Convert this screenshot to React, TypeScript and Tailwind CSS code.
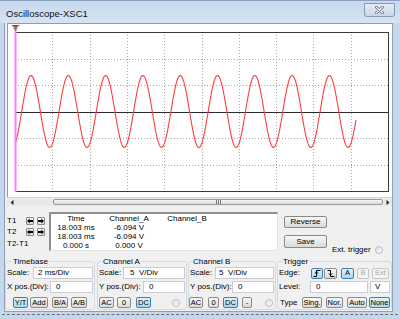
import React from "react";

type BtnProps = {
  children?: React.ReactNode;
  className?: string;
  active?: boolean;
  disabled?: boolean;
};

function Btn({ children, className = "", active, disabled }: BtnProps) {
  const look = active
    ? "border-[#3c7fb1] bg-linear-to-b from-[#e3f3fc] to-[#a6d6f2] text-black"
    : disabled
    ? "border-[#c6c6c6] bg-[#f4f4f4] text-[#a8a8a8]"
    : "border-[#8a8a8a] bg-linear-to-b from-[#f8f8f8] to-[#dadada] text-black";
  return (
    <div className={`flex items-center justify-center h-[11px] rounded-[2px] border text-[7.5px] leading-none ${look} ${className}`}>
      {children}
    </div>
  );
}

function Field({ children, className = "" }: { children?: React.ReactNode; className?: string }) {
  return (
    <div className={`h-[12px] bg-white border border-[#c9ccd2] flex items-center text-[8px] leading-none ${className}`}>
      {children}
    </div>
  );
}

function Radio({ className = "" }: { className?: string }) {
  return <div className={`w-[8px] h-[8px] rounded-full border border-[#bcbcbc] bg-linear-to-br from-[#e2e2e2] to-[#fbfbfb] ${className}`} />;
}

function Group({ title, className = "", legend = "", children }: { title: string; className?: string; legend?: string; children?: React.ReactNode }) {
  return (
    <fieldset className={`h-[53px] border border-[#d3dbe2] rounded-[3px] ${className}`}>
      <legend className={`text-[8px] leading-[9px] px-[1px] ${legend}`}>{title}</legend>
      {children}
    </fieldset>
  );
}

function ArrowBtn({ dir }: { dir: "l" | "r" }) {
  return (
    <div className="w-[8px] h-[8px] rounded-[1px] border border-[#8a8a8a] bg-linear-to-b from-[#f8f8f8] to-[#dadada] flex items-center justify-center">
      <svg width="6" height="6" viewBox="0 0 6 6">
        {dir === "l" ? (
          <path d="M0 3 L2.6 0.4 V2 H6 V4 H2.6 V5.6 Z" fill="#000" />
        ) : (
          <path d="M6 3 L3.4 0.4 V2 H0 V4 H3.4 V5.6 Z" fill="#000" />
        )}
      </svg>
    </div>
  );
}

function EdgeIcon({ rising }: { rising?: boolean }) {
  return (
    <svg width="8" height="7" viewBox="0 0 8 7">
      {rising ? (
        <>
          <path d="M0.5 6.5 H3.5 V0.5 H7.5" fill="none" stroke="#000" strokeWidth="1" />
          <path d="M2 3.5 L3.5 1.8 L5 3.5" fill="none" stroke="#000" strokeWidth="1" />
        </>
      ) : (
        <>
          <path d="M0.5 0.5 H3.5 V6.5 H7.5" fill="none" stroke="#000" strokeWidth="1" />
          <path d="M2 3.5 L3.5 5.2 L5 3.5" fill="none" stroke="#000" strokeWidth="1" />
        </>
      )}
    </svg>
  );
}

export default function App() {
  // plot box inside the screen svg: x 7..380, y 8..167
  const left = 7;
  const top = 8;
  const divX = 37.3;
  const divY = 26.5;
  const mid = top + 3 * divY;

  const wave = (() => {
    const pts: string[] = [];
    for (let x = 7; x <= 348; x += 0.5) {
      const y = mid - 36 * Math.sin((2 * Math.PI * (x - 13.7)) / divX);
      pts.push(`${x.toFixed(1)},${y.toFixed(2)}`);
    }
    return "M" + pts.join(" L");
  })();

  const vLines = [1, 2, 3, 4, 5, 6, 7, 8, 9].map((k) => Math.round(left + k * divX) + 0.5);
  const hLines = [1, 2, 4, 5].map((k) => Math.round(top + k * divY) + 0.5);

  return (
    <div className="w-[400px] h-[319px] bg-[#c4d7ed] flex flex-col overflow-hidden font-['Liberation_Sans',Arial,sans-serif] text-black">
      {/* title bar */}
      <div className="h-[23px] shrink-0 flex items-start border-t border-[#8ea3bd] bg-linear-to-b from-[#c6d9ef] to-[#d6e3f3]">
        <span className="ml-[6px] mt-[8px] text-[9.5px] leading-[10px] text-[#111]">Oscilloscope-XSC1</span>
        <div className="ml-auto mr-[5px] mt-[2px] w-[31px] h-[14px] rounded-b-[3px] border border-[#8797ad] bg-linear-to-b from-[#e3ebf5] to-[#c9d7ea] flex items-center justify-center">
          <svg width="9" height="8" viewBox="0 0 9 8">
            <path d="M1.5 1.2 L7.5 6.8 M7.5 1.2 L1.5 6.8" stroke="#5c6470" strokeWidth="2.6" strokeLinecap="round" />
            <path d="M1.5 1.2 L7.5 6.8 M7.5 1.2 L1.5 6.8" stroke="#fff" strokeWidth="1.2" strokeLinecap="round" />
          </svg>
        </div>
      </div>

      {/* client area */}
      <div className="ml-[4px] w-[389px] h-[289px] shrink-0 bg-[#f0f0f0] border-l border-r border-b border-[#8ba0ba] flex flex-col">
        {/* screen */}
        <div className="ml-[2px] h-[174px] bg-white border-t border-l border-[#9a9a9a]">
          <svg width="384" height="173" viewBox="0 0 384 173">
            {vLines.map((x) => (
              <line key={"v" + x} x1={x} y1={top} x2={x} y2={top + 159} stroke="#a9a9a9" strokeDasharray="1 2" />
            ))}
            {hLines.map((y) => (
              <line key={"h" + y} x1={left} y1={y} x2={left + 373} y2={y} stroke="#a9a9a9" strokeDasharray="1 2" />
            ))}
            <line x1={left} y1={Math.round(mid) + 0.5} x2={left + 373} y2={Math.round(mid) + 0.5} stroke="#2a2a2a" />
            <rect x={left + 0.5} y={top + 0.5} width="373" height="159" fill="none" stroke="#3a3a3a" />
            <path d={wave} fill="none" stroke="#ff3c3c" strokeWidth="1.1" />
            <line x1="7.5" y1="3" x2="7.5" y2="168" stroke="#ff7cff" strokeWidth="2" />
            <polygon points="3,1 12,1 7.5,4" fill="#e8262a" />
            <polygon points="5,3.5 10,3.5 7.5,7" fill="#2fb52f" />
          </svg>
        </div>

        {/* horizontal scrollbar */}
        <div className="ml-[2px] h-[9px] flex bg-[#e9e9e9] border-t border-[#d6d6d6]">
          <div className="w-[9px] flex items-center justify-center">
            <svg width="4" height="5" viewBox="0 0 4 5"><path d="M3.5 0 V5 L0.5 2.5 Z" fill="#222" /></svg>
          </div>
          <div className="flex-1 flex">
            <div className="ml-[37px] flex-1 my-[1px] rounded-[2px] border border-[#9c9c9c] bg-linear-to-b from-[#f6f6f6] to-[#d9d9d9] flex items-center justify-center gap-[1px]">
              <div className="w-[1px] h-[4px] bg-[#777]" />
              <div className="w-[1px] h-[4px] bg-[#777]" />
              <div className="w-[1px] h-[4px] bg-[#777]" />
            </div>
          </div>
          <div className="w-[9px] flex items-center justify-center">
            <svg width="4" height="5" viewBox="0 0 4 5"><path d="M0.5 0 V5 L3.5 2.5 Z" fill="#222" /></svg>
          </div>
        </div>

        {/* cursor readout */}
        <div className="h-[46px] flex text-[8px] leading-none">
          <div className="ml-[2px] w-[42px] pt-[11px] flex flex-col">
            <div className="flex items-center h-[8px]">
              <span className="w-[19px]">T1</span>
              <ArrowBtn dir="l" />
              <div className="ml-[3px]"><ArrowBtn dir="r" /></div>
            </div>
            <div className="flex items-center h-[8px] mt-[3px]">
              <span className="w-[19px]">T2</span>
              <ArrowBtn dir="l" />
              <div className="ml-[3px]"><ArrowBtn dir="r" /></div>
            </div>
            <div className="mt-[4px]">T2-T1</div>
          </div>
          <div className="mt-[6px] w-[229px] h-[39px] bg-white border-t-2 border-l-2 border-t-[#8f8f8f] border-l-[#8f8f8f] border-r border-b border-r-[#e3e3e3] border-b-[#e3e3e3] grid grid-cols-[50px_56px_60px] auto-rows-[9px] items-center text-center">
            <span>Time</span><span>Channel_A</span><span>Channel_B</span>
            <span>18.003 ms</span><span>-6.094 V</span><span />
            <span>18.003 ms</span><span>-6.094 V</span><span />
            <span>0.000 s</span><span>0.000 V</span><span />
          </div>
          <div className="ml-[6px] w-[43px] pt-[10px] flex flex-col">
            <Btn className="h-[12px] text-[8px]">Reverse</Btn>
            <Btn className="mt-[7px] h-[13px] text-[8px]">Save</Btn>
          </div>
          <div className="ml-[5px] mt-[39px] h-[9px] flex items-center">
            <span className="w-[43px]">Ext. trigger</span>
            <Radio />
          </div>
        </div>

        {/* controls */}
        <div className="h-[59px] pt-[5px] flex text-[8px] leading-none">
          <Group title="Timebase" className="w-[90px]" legend="ml-[6px]">
            <div className="flex items-center mt-[1px]">
              <span className="w-[27px] pl-[1px]">Scale:</span>
              <Field className="w-[60px] pl-[4px]">2 ms/Div</Field>
            </div>
            <div className="flex items-center mt-[2px]">
              <span className="w-[44px] pl-[1px]">X pos.(Div):</span>
              <Field className="w-[43px] pl-[5px]">0</Field>
            </div>
            <div className="flex items-center mt-[4px] pl-[7px]">
              <Btn active className="w-[15px]">Y/T</Btn>
              <Btn className="ml-[2px] w-[18px]">Add</Btn>
              <Btn className="ml-[4px] w-[16px]">B/A</Btn>
              <Btn className="ml-[3px] w-[16px]">A/B</Btn>
            </div>
          </Group>

          <Group title="Channel A" className="ml-[2px] w-[90px]" legend="ml-[4px]">
            <div className="flex items-center mt-[1px]">
              <span className="w-[25px] pl-[1px]">Scale:</span>
              <Field className="w-[62px] pl-[6px]">5&nbsp;&nbsp;V/Div</Field>
            </div>
            <div className="flex items-center mt-[2px]">
              <span className="w-[45px] pl-[1px]">Y pos.(Div):</span>
              <Field className="w-[42px] pl-[5px]">0</Field>
            </div>
            <div className="flex items-center mt-[4px] pl-[1px]">
              <Btn className="w-[15px]">AC</Btn>
              <Btn className="ml-[3px] w-[14px]">0</Btn>
              <Btn active className="ml-[5px] w-[15px]">DC</Btn>
              <Radio className="ml-[21px]" />
            </div>
          </Group>

          <Group title="Channel B" className="ml-[1px] w-[88px]" legend="ml-[3px]">
            <div className="flex items-center mt-[1px]">
              <span className="w-[26px] pl-[1px]">Scale:</span>
              <Field className="w-[59px] pl-[3px]">5&nbsp;&nbsp;V/Div</Field>
            </div>
            <div className="flex items-center mt-[2px]">
              <span className="w-[43px] pl-[1px]">Y pos.(Div):</span>
              <Field className="w-[42px] pl-[5px]">0</Field>
            </div>
            <div className="flex items-center mt-[4px]">
              <Btn className="w-[14px]">AC</Btn>
              <Btn className="ml-[5px] w-[11px]">0</Btn>
              <Btn active className="ml-[4px] w-[15px]">DC</Btn>
              <Btn className="ml-[4px] w-[10px]">-</Btn>
              <Radio className="ml-[13px]" />
            </div>
          </Group>

          <Group title="Trigger" className="ml-[1px] w-[115px]" legend="ml-[4px]">
            <div className="flex items-center mt-[1px] h-[12px]">
              <span className="w-[33px] pl-[1px]">Edge:</span>
              <Btn active className="w-[12px]"><EdgeIcon rising /></Btn>
              <Btn className="ml-[1px] w-[13px]"><EdgeIcon /></Btn>
              <Btn active className="ml-[4px] w-[13px]">A</Btn>
              <Btn disabled className="ml-[3px] w-[12px]">B</Btn>
              <Btn disabled className="ml-[3px] w-[17px]">Ext</Btn>
            </div>
            <div className="flex items-center mt-[2px]">
              <span className="w-[32px] pl-[1px]">Level:</span>
              <Field className="w-[58px] pl-[5px]">0</Field>
              <Field className="ml-[2px] w-[20px] pl-[4px]">V</Field>
            </div>
            <div className="flex items-center mt-[4px]">
              <span className="w-[24px] pl-[2px]">Type</span>
              <Btn className="w-[20px]">Sing.</Btn>
              <Btn className="ml-[4px] w-[17px]">Nor.</Btn>
              <Btn className="ml-[4px] w-[20px]">Auto</Btn>
              <Btn active className="ml-[2px] w-[21px]">None</Btn>
            </div>
          </Group>
        </div>
      </div>

      {/* bottom frame edge */}
      <div className="mt-[2px] mx-[2px] border-t border-dashed border-[#6d6d6d]" />
    </div>
  );
}
